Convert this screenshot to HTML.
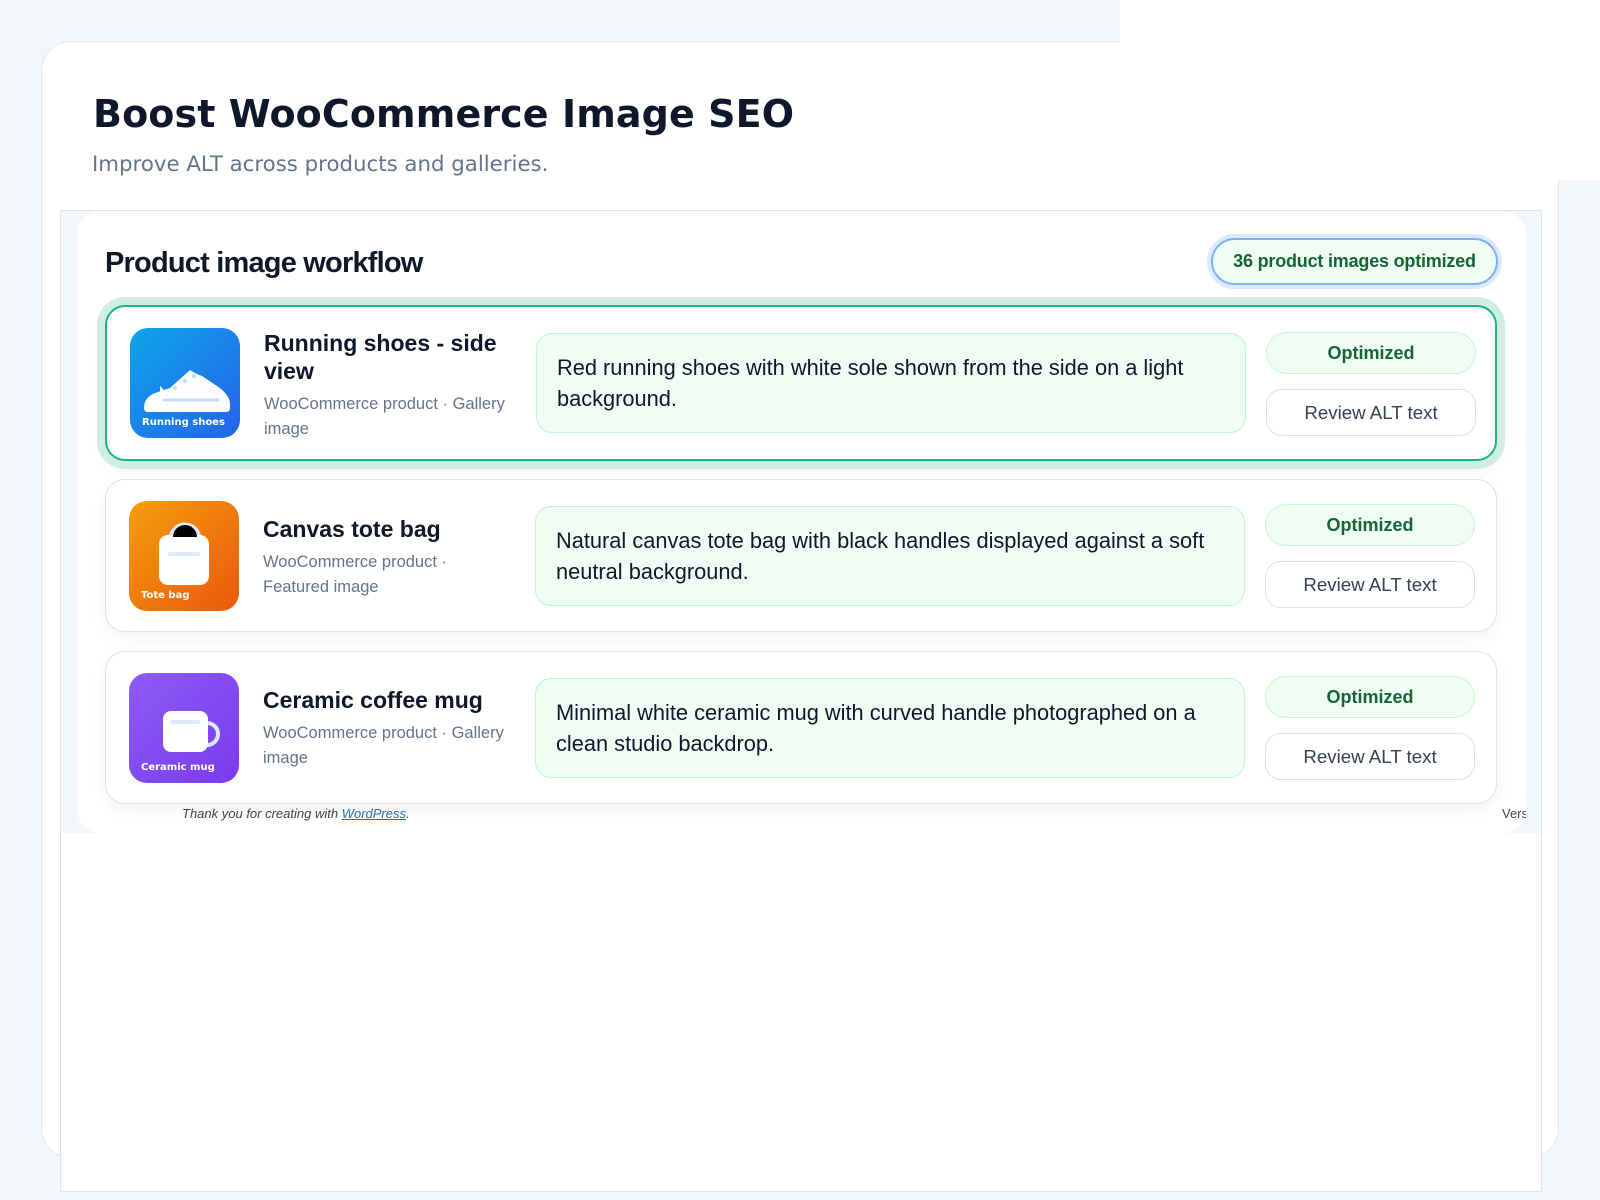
<!DOCTYPE html>
<html><head><meta charset="utf-8"><style>
*{box-sizing:border-box;margin:0;padding:0}
body{width:1600px;height:1200px;background:#f3f6fa;position:relative;overflow:hidden;font-family:"Liberation Sans",sans-serif;color:#0f172a}
.tr{position:absolute;left:1120px;top:0;width:480px;height:180px;background:#fff}
.outer{position:absolute;left:41px;top:41px;width:1518px;height:1117px;background:#fff;border:1px solid #e2e8f0;border-radius:30px}
h1{position:absolute;left:93px;top:92px;font-family:"DejaVu Sans",sans-serif;font-weight:bold;font-size:38px;color:#0f172a;letter-spacing:0.1px}
.sub{position:absolute;left:92px;top:152px;font-family:"DejaVu Sans",sans-serif;font-size:21.3px;color:#64748b}
.wp{position:absolute;left:60px;top:210px;width:1482px;height:982px;background:#fff;border:1px solid #dde3ea}
.gray{position:absolute;left:61px;top:211px;width:1480px;height:622px;background:#f3f6fa}
.card{position:absolute;left:77px;top:211px;width:1449px;height:622px;background:#fff;border-radius:24px}
.h2{position:absolute;left:105px;top:247px;font-weight:bold;font-size:29px;letter-spacing:-0.8px;color:#0f172a}
.badge{position:absolute;left:1207px;top:234px;width:295px;height:55px;border-radius:28px;background:#dbeafe}
.badge div{position:absolute;left:4px;top:4px;right:4px;bottom:4px;border:2px solid #7fb0f0;border-radius:24px;background:#f0fdf4;color:#166534;font-size:18px;font-weight:bold;text-align:center;line-height:43px;letter-spacing:-0.2px}
.row{position:absolute;left:105px;width:1392px;background:#fff;border:1px solid #dbe3ee;border-radius:20px;box-shadow:0 6px 16px rgba(15,23,42,0.05)}
.row.sel{border:2px solid #10b981;box-shadow:0 0 0 8px #d1ece4,0 8px 18px rgba(15,23,42,0.06)}
.th{position:absolute;left:23px;width:110px;height:110px;border-radius:18px;overflow:hidden}
.th span{position:absolute;left:12px;bottom:10px;color:#fff;font-weight:bold;font-size:10px;font-family:"DejaVu Sans",sans-serif}
.th svg{position:absolute;left:0;top:0}
.nm{position:absolute;left:157px;width:250px;font-weight:bold;font-size:23px;line-height:28px;color:#0f172a}
.mt{position:absolute;left:157px;width:242px;font-size:16.5px;line-height:24.5px;color:#64748b}
.alt{position:absolute;left:429px;width:710px;height:100px;background:#f0fdf4;border:1px solid #bbf7d0;border-radius:16px;padding:19px 20px;font-size:21.8px;line-height:30.5px;color:#0f172a}
.pill{position:absolute;left:1159px;width:210px;height:42px;background:#effdf4;border:1px solid #c6f6d5;border-radius:21px;text-align:center;line-height:40px;color:#166534;font-weight:bold;font-size:18px}
.btn{position:absolute;left:1159px;width:210px;height:47px;background:#fff;border:1px solid #d8e0ea;border-radius:16px;text-align:center;line-height:45px;color:#334155;font-size:18.7px}
.foot{position:absolute;left:182px;top:806px;font-size:13px;font-style:italic;color:#3c434a}
.foot a{color:#2271b1;text-decoration:underline}
.ver{position:absolute;left:1502px;top:806px;width:24px;overflow:hidden;font-size:13px;color:#3c434a;white-space:nowrap}
</style></head><body>
<div class="outer"></div>
<div class="tr"></div>
<h1>Boost WooCommerce Image SEO</h1>
<div class="sub">Improve ALT across products and galleries.</div>
<div class="wp"></div>
<div class="gray"></div>
<div class="card"></div>
<div class="h2">Product image workflow</div>
<div class="badge"><div>36 product images optimized</div></div>

<div class="row sel" style="top:305px;height:156px">
 <div class="th" style="top:21px;background:linear-gradient(135deg,#0ea5e9,#2563eb)">
  <svg width="110" height="110"><path d="M14 80 Q14 68 28 64 L40 60 L60 42 Q66 46 72 48 L84 56 Q100 66 100 76 L100 80 Q100 84 96 84 L18 84 Q14 84 14 80Z" fill="#fff"/><path d="M30 64 L30 58 L34 62Z" fill="#fff"/><line x1="34" y1="72" x2="88" y2="72" stroke="#bfdbfe" stroke-width="3" stroke-linecap="round"/><circle cx="45" cy="60" r="2" fill="#bfdbfe"/><circle cx="55" cy="53" r="2" fill="#bfdbfe"/><circle cx="64" cy="48" r="2" fill="#bfdbfe"/></svg>
  <span>Running shoes</span></div>
 <div class="nm" style="top:22px">Running shoes - side view</div>
 <div class="mt" style="top:85px">WooCommerce product · Gallery image</div>
 <div class="alt" style="top:26px">Red running shoes with white sole shown from the side on a light background.</div>
 <div class="pill" style="top:25px">Optimized</div>
 <div class="btn" style="top:82px">Review ALT text</div>
</div>

<div class="row" style="top:479px;height:153px">
 <div class="th" style="top:21px;background:linear-gradient(135deg,#f59e0b,#ea580c)">
  <svg width="110" height="110"><path d="M42 38 A14 14 0 0 1 70 38" fill="none" stroke="#dbeafe" stroke-width="5"/><rect x="30" y="34" width="50" height="50" rx="9" fill="#fff"/><path d="M44 36 A12 12 0 0 1 68 36Z" fill="#000"/><line x1="41" y1="53" x2="69" y2="53" stroke="#dbeafe" stroke-width="4" stroke-linecap="round"/></svg>
  <span>Tote bag</span></div>
 <div class="nm" style="top:35px">Canvas tote bag</div>
 <div class="mt" style="top:70px">WooCommerce product · Featured image</div>
 <div class="alt" style="top:26px">Natural canvas tote bag with black handles displayed against a soft neutral background.</div>
 <div class="pill" style="top:24px">Optimized</div>
 <div class="btn" style="top:81px">Review ALT text</div>
</div>

<div class="row" style="top:651px;height:153px">
 <div class="th" style="top:21px;background:linear-gradient(135deg,#8b5cf6,#7c3aed)">
  <svg width="110" height="110"><path d="M78 50 A10 10 0 0 1 78 72" fill="none" stroke="#dbeafe" stroke-width="4"/><rect x="34" y="38" width="45" height="41" rx="8" fill="#fff"/><line x1="43" y1="49" x2="69" y2="49" stroke="#dbeafe" stroke-width="4" stroke-linecap="round"/></svg>
  <span>Ceramic mug</span></div>
 <div class="nm" style="top:34px">Ceramic coffee mug</div>
 <div class="mt" style="top:69px">WooCommerce product · Gallery image</div>
 <div class="alt" style="top:26px">Minimal white ceramic mug with curved handle photographed on a clean studio backdrop.</div>
 <div class="pill" style="top:24px">Optimized</div>
 <div class="btn" style="top:81px">Review ALT text</div>
</div>

<div class="foot">Thank you for creating with <a>WordPress</a>.</div>
<div class="ver">Version</div>
</body></html>
